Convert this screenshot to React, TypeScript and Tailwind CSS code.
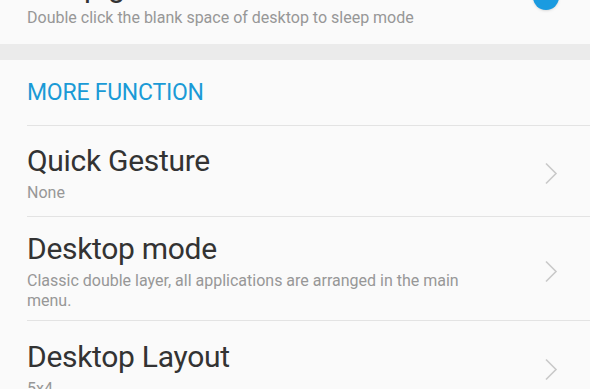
import React from 'react';

const Chevron = () => (
    <svg width="14" height="23" viewBox="0 0 14 23" fill="none">
        <polyline points="2,1.5 12,11.5 2,21.5" stroke="#c9c9c9" strokeWidth="1.6" strokeLinejoin="miter" />
    </svg>
);

interface RowProps {
    title: string;
    subtitle: string;
    pad: string;
    last?: boolean;
}

const Row = ({ title, subtitle, pad, last }: RowProps) => (
    <div className={`flex items-center border-b border-[#e3e3e3] ${last ? 'border-b-0' : ''} ml-[27px] ${pad}`}>
        <div className="w-[470px]">
            <div className="text-[30px] leading-[34px] text-[#333333] tracking-[-0.01em]">{title}</div>
            <div className="mt-[5px] text-[16px] leading-[20px] text-[#979797]">{subtitle}</div>
        </div>
        <div className="ml-auto mr-[32px] flex items-center">
            <Chevron />
        </div>
    </div>
);

export default function App() {
    return (
        <div className="w-[590px] h-[389px] overflow-hidden bg-[#fafafa]" style={{ fontFamily: 'Roboto, "Noto Sans", sans-serif' }}>
            {/* sleep row, mostly scrolled away */}
            <div className="flex items-start -mt-[30px] pl-[27px] pb-[16px]">
                <div>
                    <div className="text-[30px] leading-[34px] text-[#333333]">Sleep gesture</div>
                    <div className="mt-[4px] text-[16px] leading-[20px] text-[#979797]">Double click the blank space of desktop to sleep mode</div>
                </div>
                <div className="ml-auto mr-[31px] mt-[14px]">
                    <div className="w-[26px] h-[26px] rounded-full bg-[#1a9be0] shadow-sm" />
                </div>
            </div>

            <div className="h-[16px] bg-[#ebebeb]" />

            <div className="ml-[27px] pt-[19px] pb-[18px] border-b border-[#e3e3e3]">
                <div className="text-[23px] leading-[28px] text-[#1a9ad6] tracking-[-0.01em]">MORE FUNCTION</div>
            </div>

            <Row title="Quick Gesture" subtitle="None" pad="pt-[18px] pb-[13px]" />
            <Row title="Desktop mode" subtitle="Classic double layer, all applications are arranged in the main menu." pad="pt-[15px] pb-[9px]" />
            <Row title="Desktop Layout" subtitle="5x4" pad="pt-[19px] pb-[14px]" last />
        </div>
    );
}
